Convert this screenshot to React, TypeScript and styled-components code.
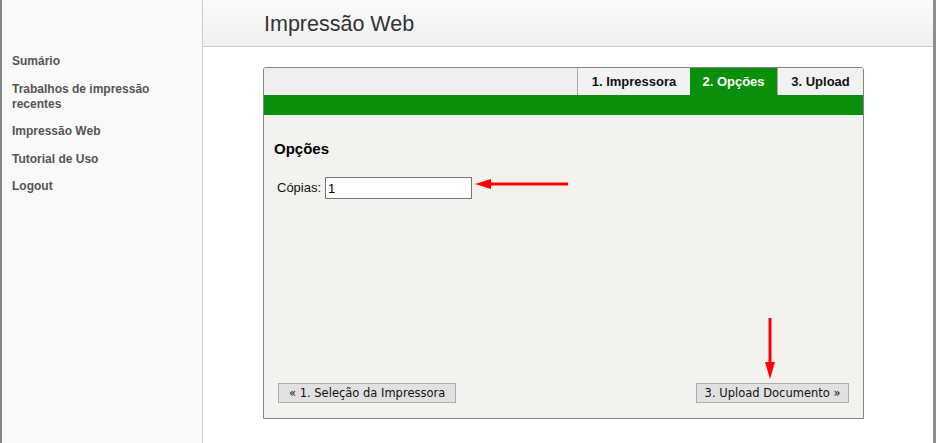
import React from "react";
import styled, { createGlobalStyle } from "styled-components";

const Global = createGlobalStyle`
  html, body { margin: 0; padding: 0; background: #fff; }
  body { font-family: "Liberation Sans", Arial, sans-serif; }
`;

const Page = styled.div`
  display: flex;
  height: 443px;
  width: 936px;
  box-sizing: border-box;
  border-left: 2px solid #858585;
  border-right: 3px solid #8e8e8e;
  overflow: hidden;
`;

const Sidebar = styled.nav`
  width: 201px;
  flex: none;
  box-sizing: border-box;
  background: #f9f9f9;
  border-right: 1px solid #cdcdcd;
  padding: 54px 0 0 10px;
  display: flex;
  flex-direction: column;
  gap: 12.5px;
`;

const NavItem = styled.a`
  display: block;
  width: 150px;
  font: bold 12px/15px "Liberation Sans", Arial, sans-serif;
  color: #555;
  text-decoration: none;
`;

const Main = styled.main`
  flex: 1;
  display: flex;
  flex-direction: column;
  background: #fff;
`;

const Header = styled.header`
  height: 46px;
  flex: none;
  background: linear-gradient(#fbfbfb, #f0f0f0);
  border-bottom: 1px solid #cccccc;
  padding-left: 61px;
  display: flex;
  align-items: center;
`;

const Title = styled.h1`
  margin: 0;
  padding-top: 2px;
  font: normal 21.5px/26px "Liberation Sans", Arial, sans-serif;
  color: #333;
`;

const Panel = styled.section`
  margin: 20px 0 0 60px;
  width: 601px;
  height: 352px;
  box-sizing: border-box;
  border: 1px solid #858585;
  border-radius: 3px 3px 0 0;
  display: flex;
  flex-direction: column;
  overflow: hidden;
`;

const TabBar = styled.div`
  height: 27px;
  flex: none;
  background: #efefef;
  display: flex;
  justify-content: flex-end;
`;

const Tab = styled.div<{ $active?: boolean; $w: number }>`
  display: flex;
  align-items: center;
  justify-content: center;
  width: ${(p) => p.$w}px;
  box-sizing: border-box;
  border-left: ${(p) => (p.$active ? "none" : "1px solid #a8a8a8")};
  background: ${(p) => (p.$active ? "#0a8f0a" : "#f2f2f2")};
  color: ${(p) => (p.$active ? "#fff" : "#111")};
  font: bold 13px/16px "Liberation Sans", Arial, sans-serif;
  padding-top: 1px;
`;

const GreenBar = styled.div`
  height: 20px;
  flex: none;
  background: #0a8f0a;
`;

const Body = styled.div`
  position: relative;
  flex: 1;
  background: #f3f2ee;
  display: flex;
  flex-direction: column;
  padding: 25px 14px 15px 10px;
`;

const Heading = styled.h2`
  margin: 0;
  font: bold 15px/18px "Liberation Sans", Arial, sans-serif;
  color: #000;
`;

const Row = styled.div`
  margin-top: 19px;
  padding-left: 3px;
  display: flex;
  align-items: center;
  gap: 4px;
`;

const Label = styled.label`
  font: 13px/16px "Liberation Sans", Arial, sans-serif;
  color: #111;
`;

const Input = styled.input`
  width: 147px;
  height: 22px;
  box-sizing: border-box;
  border: 1px solid #777;
  background: #fff;
  padding: 1px 2px 0;
  font: 13px "Liberation Sans", Arial, sans-serif;
  color: #000;
  outline: none;
`;

const Footer = styled.div`
  margin-top: auto;
  padding-left: 4px;
  display: flex;
  justify-content: space-between;
  align-items: center;
`;

const NavButton = styled.button<{ $pad: number }>`
  height: 20px;
  box-sizing: border-box;
  background: #e1e1e1;
  border: 1px solid #adadad;
  border-radius: 0;
  padding: 0 ${(p) => p.$pad}px;
  font: 11.5px/16px "DejaVu Sans", Tahoma, sans-serif;
  color: #111;
  cursor: pointer;
`;

const Arrow = styled.svg`
  position: absolute;
  overflow: visible;
`;

export default function App() {
  return (
    <>
      <Global />
      <Page>
        <Sidebar>
          <NavItem>Sumário</NavItem>
          <NavItem>Trabalhos de impressão recentes</NavItem>
          <NavItem>Impressão Web</NavItem>
          <NavItem>Tutorial de Uso</NavItem>
          <NavItem>Logout</NavItem>
        </Sidebar>
        <Main>
          <Header>
            <Title>Impressão Web</Title>
          </Header>
          <Panel>
            <TabBar>
              <Tab $w={113}>1. Impressora</Tab>
              <Tab $w={87} $active>2. Opções</Tab>
              <Tab $w={86}>3. Upload</Tab>
            </TabBar>
            <GreenBar />
            <Body>
              <Heading>Opções</Heading>
              <Row>
                <Label htmlFor="copias">Cópias:</Label>
                <Input id="copias" defaultValue="1" />
              </Row>
              <Footer>
                <NavButton $pad={10}>« 1. Seleção da Impressora</NavButton>
                <NavButton $pad={7.5}>3. Upload Documento »</NavButton>
              </Footer>
              <Arrow style={{ left: 211, top: 63 }} width="94" height="12" viewBox="0 0 94 12">
                <line x1="12" y1="6" x2="93" y2="6" stroke="#f00" strokeWidth="3" />
                <polygon points="0,6 16,1 16,11" fill="#f00" />
              </Arrow>
              <Arrow style={{ left: 500, top: 203 }} width="12" height="62" viewBox="0 0 12 62">
                <line x1="6" y1="0" x2="6" y2="50" stroke="#f00" strokeWidth="3" />
                <polygon points="1,44 11,44 6,61" fill="#f00" />
              </Arrow>
            </Body>
          </Panel>
        </Main>
      </Page>
    </>
  );
}
